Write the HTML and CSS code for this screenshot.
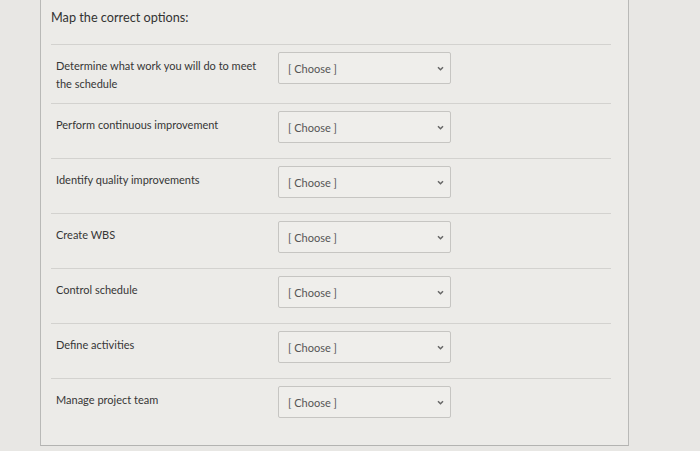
FILE: index.html
```html
<!DOCTYPE html>
<html lang="en">
<head>
<meta charset="utf-8">
<title>Map the correct options</title>
<link rel="stylesheet" href="styles.css">
</head>
<body>
<div class="panel">
  <div class="title">Map the correct options:</div>
  <div class="rows">
    <div class="row">
      <div class="label">Determine what work you will do to meet the schedule</div>
      <div class="select"><span>[ Choose ]</span><svg class="chev" viewBox="0 0 8 6" width="7" height="5"><path d="M1 1.5 L4 4.5 L7 1.5" fill="none" stroke="#666" stroke-width="1.8"/></svg></div>
    </div>
    <div class="row">
      <div class="label">Perform continuous improvement</div>
      <div class="select"><span>[ Choose ]</span><svg class="chev" viewBox="0 0 8 6" width="7" height="5"><path d="M1 1.5 L4 4.5 L7 1.5" fill="none" stroke="#666" stroke-width="1.8"/></svg></div>
    </div>
    <div class="row">
      <div class="label">Identify quality improvements</div>
      <div class="select"><span>[ Choose ]</span><svg class="chev" viewBox="0 0 8 6" width="7" height="5"><path d="M1 1.5 L4 4.5 L7 1.5" fill="none" stroke="#666" stroke-width="1.8"/></svg></div>
    </div>
    <div class="row">
      <div class="label">Create WBS</div>
      <div class="select"><span>[ Choose ]</span><svg class="chev" viewBox="0 0 8 6" width="7" height="5"><path d="M1 1.5 L4 4.5 L7 1.5" fill="none" stroke="#666" stroke-width="1.8"/></svg></div>
    </div>
    <div class="row">
      <div class="label">Control schedule</div>
      <div class="select"><span>[ Choose ]</span><svg class="chev" viewBox="0 0 8 6" width="7" height="5"><path d="M1 1.5 L4 4.5 L7 1.5" fill="none" stroke="#666" stroke-width="1.8"/></svg></div>
    </div>
    <div class="row">
      <div class="label">Define activities</div>
      <div class="select"><span>[ Choose ]</span><svg class="chev" viewBox="0 0 8 6" width="7" height="5"><path d="M1 1.5 L4 4.5 L7 1.5" fill="none" stroke="#666" stroke-width="1.8"/></svg></div>
    </div>
    <div class="row last">
      <div class="label">Manage project team</div>
      <div class="select"><span>[ Choose ]</span><svg class="chev" viewBox="0 0 8 6" width="7" height="5"><path d="M1 1.5 L4 4.5 L7 1.5" fill="none" stroke="#666" stroke-width="1.8"/></svg></div>
    </div>
  </div>
</div>
</body>
</html>
```

FILE: styles.css
```css
html, body {
  margin: 0;
  padding: 0;
}
body {
  background: #e8e7e4;
  font-family: Lato, "Open Sans", sans-serif;
  width: 700px;
  height: 451px;
  overflow: hidden;
}
.panel {
  margin-left: 40px;
  width: 589px;
  height: 446px;
  background: #ecebe8;
  border-left: 1px solid #b9b9b7;
  border-right: 1px solid #b9b9b7;
  border-bottom: 1px solid #b3b3b1;
  box-sizing: border-box;
  padding: 0 17px 0 10px;
}
.title {
  height: 44px;
  box-sizing: border-box;
  padding-top: 8px;
  font-size: 12.7px;
  line-height: 18px;
  color: #333;
}
.rows {
  border-top: 1px solid #d3d2cf;
}
.row {
  display: flex;
  align-items: flex-start;
  border-bottom: 1px solid #d3d2cf;
  padding-left: 5px;
}
.row.last {
  border-bottom: none;
}
.label {
  width: 206px;
  margin-top: 12px;
  margin-bottom: 10px;
  font-size: 11px;
  line-height: 18px;
  color: #363636;
}
.select {
  margin-left: 16px;
  margin-top: 7px;
  margin-bottom: 15px;
  width: 173px;
  height: 32px;
  box-sizing: border-box;
  border: 1px solid #c6c5c2;
  border-radius: 2px;
  background: #efeeeb;
  display: flex;
  align-items: center;
  justify-content: space-between;
  padding: 0 6px 0 9px;
  font-size: 11px;
  color: #555;
}
.chev {
  display: block;
}
```
